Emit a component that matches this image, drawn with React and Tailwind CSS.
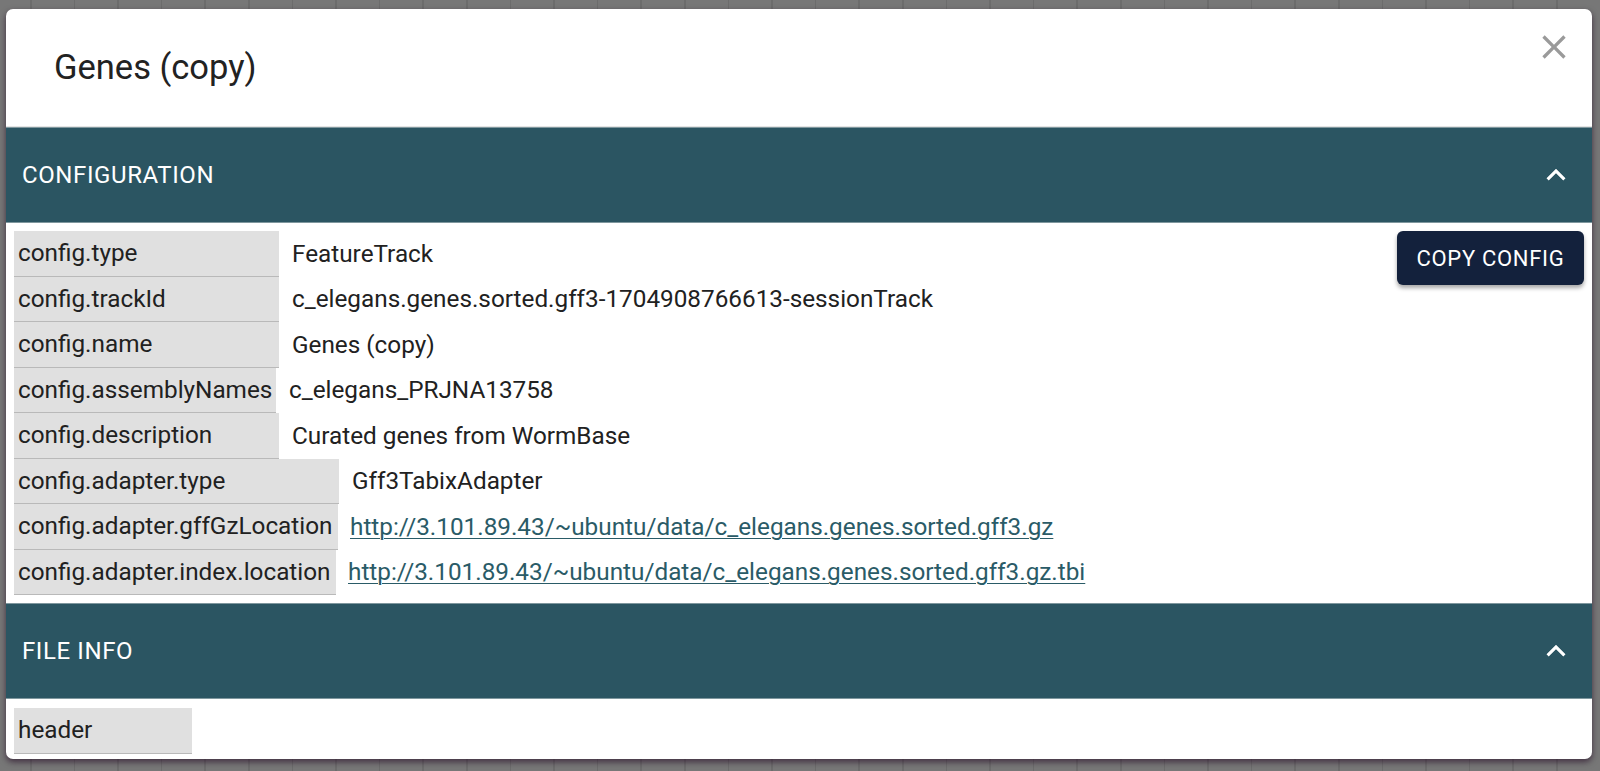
import React from 'react';

const configRows = [
  { key: 'config.type', value: 'FeatureTrack', w: 'w-[265px]' },
  { key: 'config.trackId', value: 'c_elegans.genes.sorted.gff3-1704908766613-sessionTrack', w: 'w-[265px]' },
  { key: 'config.name', value: 'Genes (copy)', w: 'w-[265px]' },
  { key: 'config.assemblyNames', value: 'c_elegans_PRJNA13758', w: 'w-[262px]' },
  { key: 'config.description', value: 'Curated genes from WormBase', w: 'w-[265px]' },
  { key: 'config.adapter.type', value: 'Gff3TabixAdapter', w: 'w-[325px]' },
  {
    key: 'config.adapter.gffGzLocation',
    value: 'http://3.101.89.43/~ubuntu/data/c_elegans.genes.sorted.gff3.gz',
    w: 'w-[324px]',
    link: true,
  },
  {
    key: 'config.adapter.index.location',
    value: 'http://3.101.89.43/~ubuntu/data/c_elegans.genes.sorted.gff3.gz.tbi',
    w: 'w-[322px]',
    link: true,
  },
];

const ChevronUp = () => (
  <svg width="38" height="38" viewBox="0 0 24 24" fill="currentColor">
    <path d="M12 8l-6 6 1.41 1.41L12 10.83l4.59 4.58L18 14z" />
  </svg>
);

const CloseIcon = () => (
  <svg width="40" height="40" viewBox="0 0 24 24" fill="currentColor">
    <path d="M19 6.41 17.59 5 12 10.59 6.41 5 5 6.41 10.59 12 5 17.59 6.41 19 12 13.41 17.59 19 19 17.59 13.41 12z" />
  </svg>
);

const AccordionBar = ({ title }) => (
  <div className="flex h-[96px] items-center justify-between border-y border-[#7f979e] bg-[#2b5562] pl-[16px] pr-[17px] text-white">
    <span className="text-[24px] tracking-[0.6px]">{title}</span>
    <ChevronUp />
  </div>
);

const KeyCell = ({ children, w }) => (
  <div
    className={`${w} flex h-[45.5px] shrink-0 items-center whitespace-nowrap border-b-[1.5px] border-[#b9b9b9] bg-[#e0e0e0] pl-[4px] text-[24.3px] text-[#212121]`}
  >
    {children}
  </div>
);

export default function App() {
  return (
    <div className="h-[771px] w-[1600px] overflow-hidden bg-[#777777] bg-[repeating-linear-gradient(90deg,#777777_0px,#777777_30px,#6c6c6c_30px,#6c6c6c_31.5px,#777777_31.5px,#777777_43.6px)] pl-[6px] pr-[8px] pt-[9px] font-['Roboto',sans-serif]">
      <div className="relative h-[750px] w-[1586px] overflow-hidden rounded-[7px] bg-white shadow-[0_3px_6px_rgba(30,0,30,0.6)]">
        {/* Title */}
        <div className="flex h-[118px] items-center border-b border-[#e4e4e4] pl-[48px]">
          <h2 className="text-[34.5px] text-[#222]">Genes (copy)</h2>
        </div>
        <button className="absolute right-[18px] top-[18px] text-[#9a9a9a]" aria-label="close">
          <CloseIcon />
        </button>

        <AccordionBar title="CONFIGURATION" />

        <div className="relative pb-[8px] pl-[8px] pt-[8px]">
          <button className="absolute right-[8px] top-[8px] h-[54px] w-[187px] rounded-[6px] bg-[#13213c] text-[22px] font-normal tracking-[0.7px] text-white shadow-[0_3px_4px_rgba(0,0,0,0.35)]">
            COPY CONFIG
          </button>
          {configRows.map((row) => (
            <div key={row.key} className="flex items-center">
              <KeyCell w={row.w}>{row.key}</KeyCell>
              {row.link ? (
                <a className="ml-[12px] text-[24.3px] text-[#2a5b67] underline decoration-[1px] underline-offset-[3px]">
                  {row.value}
                </a>
              ) : (
                <span className="ml-[13px] text-[24.3px] text-[#212121]">{row.value}</span>
              )}
            </div>
          ))}
        </div>

        <AccordionBar title="FILE INFO" />

        <div className="pl-[8px] pt-[9px]">
          <KeyCell w="w-[178px]">header</KeyCell>
        </div>
      </div>
    </div>
  );
}
